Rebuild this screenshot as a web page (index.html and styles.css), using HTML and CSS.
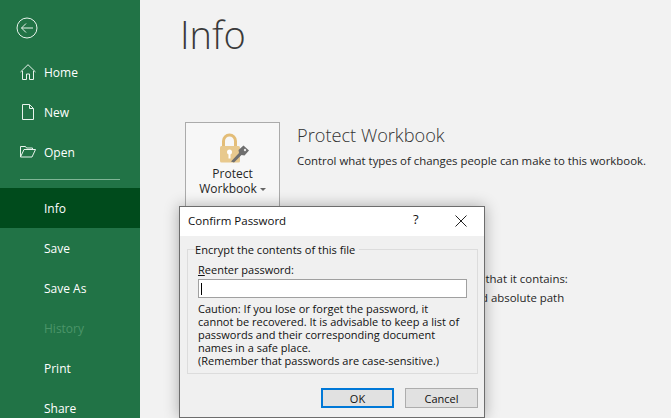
FILE: index.html
```html
<!DOCTYPE html>
<html lang="en">

<head>
    <meta charset="UTF-8">
    <meta name="viewport" content="width=device-width, initial-scale=1.0">
    <title>Info</title>
    <link rel="stylesheet" href="styles.css">
</head>

<body>
    <!-- Backstage navigation -->
    <nav class="sidebar">
        <a href="#" class="back">
            <svg width="22" height="22" viewBox="0 0 22 22" fill="none" stroke="#e8f3ec" stroke-width="1">
                <circle cx="11" cy="11" r="10"/>
                <path d="M5.500 11H17M10 6.500 5.500 11l4.500 4.500"/>
            </svg>
        </a>
        <a href="#" class="nav-item">
            <svg class="nav-icon" width="16" height="16" viewBox="0 0 16 16" fill="none" stroke="#e8f3ec" stroke-width="1">
                <path d="M.5 8 8 .7 15.500 8M2.500 7v8.500h4V10h3v5.500h4V7"/>
            </svg>
            Home
        </a>
        <a href="#" class="nav-item">
            <svg class="nav-icon" width="16" height="16" viewBox="0 0 16 16" fill="none" stroke="#e8f3ec" stroke-width="1">
                <path d="M2.500.5v15h11V4.500L9.500.5zM9.500.5v4h4"/>
            </svg>
            New
        </a>
        <a href="#" class="nav-item">
            <svg class="nav-icon" width="16" height="16" viewBox="0 0 16 16" fill="none" stroke="#e8f3ec" stroke-width="1">
                <path d="M.5 13V2.500h5l1 1.500h6v1.500M.5 13h11.500l3.500-7.500H4z"/>
            </svg>
            Open
        </a>
        <div class="nav-line"></div>
        <a href="#" class="nav-item active">Info</a>
        <a href="#" class="nav-item">Save</a>
        <a href="#" class="nav-item">Save As</a>
        <a href="#" class="nav-item disabled">History</a>
        <a href="#" class="nav-item">Print</a>
        <a href="#" class="nav-item">Share</a>
    </nav>

    <!-- Info page -->
    <main class="main-content">
        <h1>Info</h1>
        <section class="protect">
            <div class="protect-btn">
                <svg class="lock-icon" width="31" height="30" viewBox="0 0 31 30">
                    <path d="M4.500 13V8a6 6 0 0 1 12 0v5" fill="none" stroke="#e3bd78" stroke-width="3"/>
                    <rect x="1" y="13" width="20" height="16.500" rx="1.500" fill="#e8c98e"/>
                    <circle cx="10.500" cy="19" r="2.500" fill="#fff"/>
                    <rect x="9.500" y="19.500" width="2" height="6" fill="#fff"/>
                    <path d="M12 28.500l8-8.500-.5-3 5-4.500 5.500 5-4.500 5-3-.5-7.500 7.500z" fill="#6f6f6f"/>
                    <circle cx="26" cy="17" r="1.200" fill="#e8e8e8"/>
                </svg>
                <span>Protect</span>
                <span>Workbook<i class="caret"></i></span>
            </div>
            <div class="protect-text">
                <h2>Protect Workbook</h2>
                <p>Control what types of changes people can make to this workbook.</p>
            </div>
        </section>
        <section class="inspect">
            <p>Before publishing this file, be aware that it contains:</p>
            <p class="inspect-item">Document properties and absolute path</p>
        </section>
    </main>

    <!-- Modal dialog -->
    <div class="dialog">
        <div class="dialog-title">
            <span class="dialog-name">Confirm Password</span>
            <span class="dialog-help">?</span>
            <svg class="dialog-close" width="12" height="12" viewBox="0 0 12 12" fill="none" stroke="#222" stroke-width="1">
                <path d="M.5.500l11 11M11.500.500l-11 11"/>
            </svg>
        </div>
        <div class="dialog-body">
            <fieldset class="group">
                <legend>Encrypt the contents of this file</legend>
                <label for="pass"><u>R</u>eenter password:</label>
                <div class="pass-input" id="pass"><i class="cursor"></i></div>
                <p>Caution: If you lose or forget the password, it<br>cannot be recovered. It is advisable to keep a list of<br>passwords and their corresponding document<br>names in a safe place.<br>(Remember that passwords are case-sensitive.)</p>
            </fieldset>
            <div class="dialog-buttons">
                <button class="primary">OK</button>
                <button>Cancel</button>
            </div>
        </div>
    </div>
</body>

</html>
```

FILE: styles.css
```css
* {
    box-sizing: border-box;
    margin: 0;
    padding: 0;
    font-family: "Open Sans", sans-serif;
}

body {
    display: flex;
    height: 100vh;
    overflow: hidden;
    background: #f2f2f2;
    color: #262626;
}

/* Sidebar */

.sidebar {
    width: 140px;
    flex-shrink: 0;
    display: flex;
    flex-direction: column;
    background: #217346;
    padding-top: 17px;
}

.back {
    display: flex;
    margin: 0 0 13px 16px;
    height: 22px;
}

.nav-item {
    position: relative;
    display: flex;
    align-items: center;
    flex-shrink: 0;
    height: 40px;
    padding-left: 44px;
    color: #fff;
    font-size: 12px;
    text-decoration: none;
}

.nav-icon {
    position: absolute;
    left: 20px;
    top: 12px;
}

.nav-line {
    flex-shrink: 0;
    height: 1px;
    margin: 7px 20px 8px;
    background: #7fb596;
}

.active {
    background: #004b1c;
}

.disabled {
    color: #4b9569;
}

/* Main */

.main-content {
    flex: 1;
    padding: 4px 0 0 40px;
}

h1 {
    font-size: 38px;
    font-weight: 300;
    line-height: 60px;
    color: #3a3a3a;
}

.protect {
    display: flex;
    gap: 17px;
    margin: 58px 0 0 5px;
}

.protect-btn {
    width: 95px;
    height: 110px;
    display: flex;
    flex-direction: column;
    align-items: center;
    padding-top: 10px;
    background: #f7f7f7;
    border: 1px solid #ababab;
    font-size: 12px;
    line-height: 15px;
}

.lock-icon {
    margin: 0 0 3px 3px;
}

.caret {
    display: inline-block;
    margin: 0 0 2px 3px;
    border-top: 3px solid #666;
    border-left: 3px solid transparent;
    border-right: 3px solid transparent;
}

.protect-text h2 {
    font-size: 18.200px;
    font-weight: 300;
    line-height: 26px;
    color: #333;
}

.protect-text p {
    font-size: 11.400px;
    line-height: 18px;
    margin-top: 4px;
    white-space: nowrap;
}

.inspect {
    margin: 37px 0 0 113px;
    font-size: 11.400px;
    line-height: 19px;
    white-space: nowrap;
}

.inspect-item {
    margin-left: 58px;
}

/* Dialog, sits over the page */

.dialog {
    position: absolute;
    left: 179px;
    top: 206px;
    width: 306px;
    height: 212px;
    display: flex;
    flex-direction: column;
    background: #f0f0f0;
    border: 1px solid #6d6d6d;
    box-shadow: 0 0 14px rgba(0, 0, 0, 0.3);
    font-size: 11px;
    color: #111;
}

.dialog-title {
    position: relative;
    height: 29px;
    flex-shrink: 0;
    display: flex;
    align-items: center;
    padding: 0 0 2px 8px;
    background: #fff;
    font-size: 11.500px;
}

.dialog-help {
    position: absolute;
    left: 233px;
    top: 3px;
    font-size: 13px;
}

.dialog-close {
    position: absolute;
    left: 275px;
    top: 8px;
}

.dialog-body {
    padding: 6px 6px 0 7px;
}

.group {
    width: 291px;
    height: 132px;
    border: 1px solid #dcdcdc;
    padding: 0 10px;
}

.group legend {
    margin-left: -3px;
    padding: 0 4px 0 0;
    line-height: 15px;
    font-size: 11.100px;
}

.group label {
    display: block;
    line-height: 15px;
    margin-top: 5px;
}

.pass-input {
    width: 269px;
    height: 19px;
    margin-top: 2px;
    padding: 3px 2px;
    background: #fff;
    border: 1px solid #a0a0a0;
}

.cursor {
    display: block;
    width: 1px;
    height: 12px;
    background: #000;
}

.group p {
    margin-top: 4px;
    line-height: 13px;
    white-space: nowrap;
    font-size: 11px;
}

.dialog-buttons {
    display: flex;
    justify-content: flex-end;
    gap: 11px;
    margin-top: 14px;
}

button {
    width: 73px;
    height: 20px;
    background: #e1e1e1;
    border: 1px solid #adadad;
    font-size: 11px;
    color: #111;
}

button.primary {
    border: 2px solid #0078d7;
}
```
